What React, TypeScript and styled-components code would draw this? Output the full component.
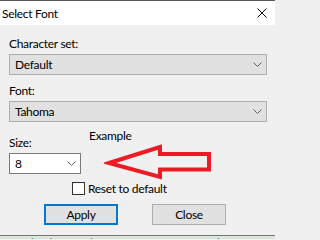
import styled, { createGlobalStyle } from "styled-components";

const Global = createGlobalStyle`
  html, body {
    margin: 0;
    padding: 0;
    background: #f0f0f0;
  }
  body {
    font-family: Lato, "Noto Sans", "Liberation Sans", sans-serif;
    font-size: 12px;
    letter-spacing: -0.3px;
    color: #000;
  }
`;

const Window = styled.div`
  width: 275px;
  height: 239px;
  display: flex;
  flex-direction: column;
  overflow: hidden;
  border-top: 1px solid #5a5a5a;
  box-sizing: border-box;
  background: #f0f0f0;
`;

const TitleBar = styled.div`
  height: 24px;
  background: #fff;
  display: flex;
  align-items: center;
  justify-content: space-between;
  padding: 0 8px 0 2px;
`;

const Title = styled.span`
  font-size: 12px;
  line-height: 15px;
`;

const Body = styled.div`
  flex: 1;
  display: flex;
  flex-direction: column;
  padding: 11px 8px 0 9px;
`;

const Label = styled.div`
  line-height: 15px;
  height: 15px;
  margin-bottom: 3px;
`;

const Select = styled.div<{ $white?: boolean; $width?: number }>`
  box-sizing: border-box;
  height: 21px;
  width: ${(p) => (p.$width ? `${p.$width}px` : "100%")};
  background: ${(p) => (p.$white ? "#fff" : "#e1e1e1")};
  border: 1px solid ${(p) => (p.$white ? "#7a7a7a" : "#adadad")};
  display: flex;
  align-items: center;
  justify-content: space-between;
  padding: 0 4px 0 5px;
  line-height: 15px;
`;

const Group = styled.div`
  display: flex;
  flex-direction: column;
  margin-bottom: 8px;
`;

const SizeRow = styled.div`
  display: flex;
  margin-top: -2px;
`;

const SizeColumn = styled.div`
  display: flex;
  flex-direction: column;
  padding-top: 7px;
`;

const ExampleColumn = styled.div`
  display: flex;
  flex-direction: column;
  margin-left: 8px;
`;

const ExampleText = styled.div`
  line-height: 15px;
`;

const Arrow = styled.svg`
  margin: 1px 0 0 15px;
  display: block;
`;

const CheckRow = styled.label`
  display: flex;
  align-items: center;
  margin: -1px 0 0 63px;
  line-height: 15px;
`;

const CheckBox = styled.span`
  box-sizing: border-box;
  width: 13px;
  height: 13px;
  border: 1px solid #333;
  background: #fff;
  margin-right: 3px;
`;

const Buttons = styled.div`
  display: flex;
  gap: 34px;
  margin: 8px 0 0 35px;
`;

const Button = styled.div<{ $default?: boolean }>`
  box-sizing: border-box;
  width: 74px;
  height: 21px;
  background: #e1e1e1;
  border: ${(p) => (p.$default ? "2px solid #0078d7" : "1px solid #adadad")};
  display: flex;
  align-items: center;
  justify-content: center;
  line-height: 15px;
`;

const Backdrop = styled.div`
  margin-top: auto;
  height: 3px;
  border-top: 1px solid #6f786f;
  background: #dde6da;
  overflow: hidden;
  display: flex;
  justify-content: space-between;
  padding: 0 12px 0 0;
`;

const BackdropText = styled.span`
  color: #2a7a8a;
  font-size: 12px;
  line-height: 15px;
  margin-top: -1px;
`;

const Chevron = ({ color = "#606060" }: { color?: string }) => (
  <svg width="9" height="5" viewBox="0 0 9 5">
    <path d="M0.5 0.5 L4.5 4.5 L8.5 0.5" fill="none" stroke={color} strokeWidth="1" />
  </svg>
);

const CloseIcon = () => (
  <svg width="10" height="10" viewBox="0 0 10 10">
    <path d="M0.5 0.5 L9.5 9.5 M9.5 0.5 L0.5 9.5" stroke="#000" strokeWidth="1" />
  </svg>
);

export default function App() {
  return (
    <>
      <Global />
      <Window>
        <TitleBar>
          <Title>Select Font</Title>
          <CloseIcon />
        </TitleBar>
        <Body>
          <Group>
            <Label>Character set:</Label>
            <Select>
              <span>Default</span>
              <Chevron />
            </Select>
          </Group>
          <Group>
            <Label>Font:</Label>
            <Select>
              <span>Tahoma</span>
              <Chevron />
            </Select>
          </Group>
          <SizeRow>
            <SizeColumn>
              <Label>Size:</Label>
              <Select $white $width={72}>
                <span>8</span>
                <Chevron />
              </Select>
            </SizeColumn>
            <ExampleColumn>
              <ExampleText>Example</ExampleText>
              <Arrow width="110" height="38" viewBox="104 144 110 38">
                <path
                  d="M109 163 L160 147 L160 154 L209 154 L209 169.5 L160 169.5 L160 177 Z"
                  fill="none"
                  stroke="#ed1c24"
                  strokeWidth="4"
                  strokeLinejoin="miter"
                />
              </Arrow>
            </ExampleColumn>
          </SizeRow>
          <CheckRow>
            <CheckBox />
            Reset to default
          </CheckRow>
          <Buttons>
            <Button $default>Apply</Button>
            <Button>Close</Button>
          </Buttons>
        </Body>
        <Backdrop>
          <BackdropText>Download Rewards</BackdropText>
          <BackdropText>Shop from</BackdropText>
        </Backdrop>
      </Window>
    </>
  );
}
